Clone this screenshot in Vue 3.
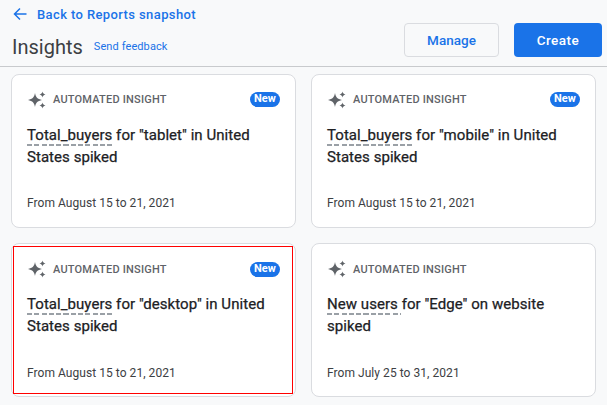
<script setup>
const cards = [
  { title: 'Total_buyers', rest: ' for "tablet" in United States spiked', date: 'From August 15 to 21, 2021', isNew: true, marked: false },
  { title: 'Total_buyers', rest: ' for "mobile" in United States spiked', date: 'From August 15 to 21, 2021', isNew: true, marked: false },
  { title: 'Total_buyers', rest: ' for "desktop" in United States spiked', date: 'From August 15 to 21, 2021', isNew: true, marked: true },
  { title: 'New users', rest: ' for "Edge" on website spiked', date: 'From July 25 to 31, 2021', isNew: false, marked: false }
]
</script>

<template>
  <div class="page">
    <header class="head">
      <div class="left">
        <div class="back">
          <svg class="arrow" width="16" height="16" viewBox="0 0 16 16" fill="none">
            <path d="M14.5 8H2.5M8 2.5L2.5 8L8 13.5" stroke="#1a73e8" stroke-width="1.5" />
          </svg>
          <span>Back to Reports snapshot</span>
        </div>
        <div class="title-row">
          <h1>Insights</h1>
          <span class="feedback">Send feedback</span>
        </div>
      </div>
      <div class="actions">
        <button class="btn manage">Manage</button>
        <button class="btn create">Create</button>
      </div>
    </header>
    <main class="grid">
      <article v-for="c in cards" :key="c.rest" class="card">
        <div class="top">
          <svg class="spark" width="20" height="20" viewBox="0 0 20 20" fill="#5f6368">
            <path d="M8 3C8.8 7.2 10.3 8.9 15 10C10.3 11.1 8.8 12.8 8 17C7.2 12.8 5.7 11.1 1 10C5.7 8.9 7.2 7.2 8 3Z" />
            <path d="M15.5 1.5C15.8 3.2 16.3 3.7 18.5 4.5C16.3 5.3 15.8 5.8 15.5 7.5C15.2 5.8 14.7 5.3 12.5 4.5C14.7 3.7 15.2 3.2 15.5 1.5Z" />
            <path d="M15.5 12.5C15.8 14.2 16.3 14.7 18.5 15.5C16.3 16.3 15.8 16.8 15.5 18.5C15.2 16.8 14.7 16.3 12.5 15.5C14.7 14.7 15.2 14.2 15.5 12.5Z" />
          </svg>
          <span class="label">AUTOMATED INSIGHT</span>
          <span v-if="c.isNew" class="badge">New</span>
        </div>
        <p class="title"><span class="metric">{{ c.title }}</span>{{ c.rest }}</p>
        <p class="date">{{ c.date }}</p>
        <div v-if="c.marked" class="mark"></div>
      </article>
    </main>
  </div>
</template>

<style>
html, body { margin: 0; background: #f8f9fa; }
</style>

<style scoped>
.page {
  width: 607px;
  height: 405px;
  overflow: hidden;
  background: #f8f9fa;
  font-family: Roboto, "Liberation Sans", sans-serif;
  color: #202124;
}
.head {
  height: 66px;
  border-bottom: 1px solid #c8cacd;
  display: flex;
  justify-content: space-between;
}
.left { padding-left: 12px; }
.back {
  display: flex;
  align-items: center;
  gap: 9px;
  height: 29px;
  color: #1a73e8;
  font-size: 13px;
  font-weight: 500;
  letter-spacing: 0.39px;
}
.arrow { margin-top: -1px; }
.title-row { display: flex; align-items: center; gap: 11px; height: 35px; }
h1 { margin: 0; font-size: 20px; font-weight: 400; color: #3c4043; }
.feedback { color: #1a73e8; font-size: 11px; letter-spacing: 0.1px; }
.actions { display: flex; gap: 15px; padding: 23px 0 0; height: 34px; margin-right: 5px; }
.btn {
  width: 95px;
  height: 34px;
  border-radius: 4px;
  font: 500 13.5px Roboto, sans-serif;
  padding: 0;
}
.manage { background: #f8f9fa; border: 1px solid #dadce0; color: #1a73e8; }
.create { width: 88px; background: #1a73e8; border: 0; color: #fff; letter-spacing: 0.5px; }
.grid {
  display: grid;
  grid-template-columns: 285px 285px;
  grid-auto-rows: 154px;
  column-gap: 15px;
  row-gap: 15px;
  padding: 7px 0 0 11px;
}
.card {
  position: relative;
  box-sizing: border-box;
  background: #fff;
  border: 1px solid #dadce0;
  border-radius: 8px;
  padding: 13px 15px 0;
  display: flex;
  flex-direction: column;
}
.top { display: flex; align-items: center; height: 22px; margin-top: 1px; }
.label { margin: -2px 0 0 6px; font-size: 11px; font-weight: 500; color: #5f6368; letter-spacing: 0.2px; }
.badge {
  margin-left: auto;
  margin-top: -2px;
  background: #1a73e8;
  color: #fff;
  font-size: 11px;
  font-weight: 700;
  border-radius: 8px;
  height: 15px;
  line-height: 14px;
  width: 30px;
  text-align: center;
}
.title {
  margin: 13px 0 0;
  width: 245px;
  font-size: 15px;
  font-weight: 400;
  line-height: 22px;
  letter-spacing: 0.05px;
  color: #202124;
  -webkit-text-stroke: 0.25px #202124;
}
.metric {
  padding: 0 3px 2px 0;
  margin-right: -3px;
  background-image: repeating-linear-gradient(to right, #9aa0a6 0 5px, transparent 5px 7.3px);
  background-size: 100% 2px;
  background-repeat: no-repeat;
  background-position: 0 100%;
}
.date { margin: auto 0 17px; font-size: 12px; color: #3c4043; letter-spacing: 0.05px; }
.card:nth-child(n+3) .top { margin-top: 2px; }
.card:nth-child(n+3) .spark { margin-top: -2px; }
.card:nth-child(n+3) .title { margin-top: 12px; }
.card:nth-child(n+3) .date { margin-bottom: 16px; }
.mark {
  position: absolute;
  left: 1px;
  top: 2px;
  width: 278px;
  height: 146px;
  border: 1px solid #f00;
}
</style>
